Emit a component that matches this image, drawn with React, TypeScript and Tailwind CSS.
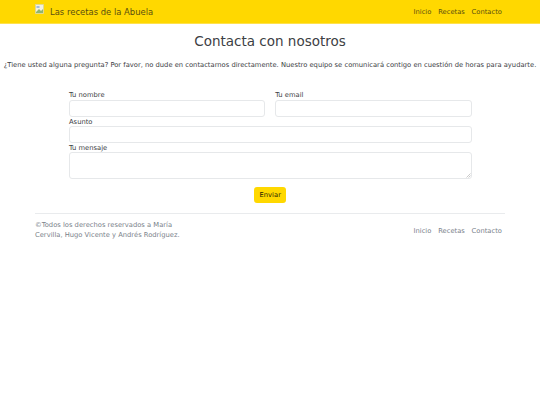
export default function App() {
  const f = { fontFamily: '"DejaVu Sans", sans-serif' };
  const field = "block w-full bg-white border border-[#e6e8ea] rounded-[3px]";
  const label = "block h-[9px] leading-[11px]";
  return (
    <div style={f} className="w-[540px] h-[405px] bg-white text-[#3c4044] overflow-hidden antialiased opacity-[0.999] font-['DejaVu_Sans']">
      <nav className="h-[24px] bg-[#ffd800] border-b border-[#ffe14d] flex items-center justify-between pl-[35px] pr-[38px]">
        <div className="flex items-center">
          <svg width="10" height="12" viewBox="0 0 10 12" className="mr-[5px] -mt-[3px]">
            <rect x="0.5" y="0.5" width="8" height="9" fill="#f4f1dc" stroke="#d8d49f" strokeWidth="0.7" />
            <path d="M1 8 L4 5 L6 7 L8 5 L8 9 L1 9Z" fill="#8fb56f" />
            <rect x="1.5" y="2" width="3" height="2" fill="#9fbce0" />
          </svg>
          <span className="text-[8.44px] leading-[12px] mt-[1px] text-[#5a4f10]">Las recetas de la Abuela</span>
        </div>
        <div className="flex gap-[6.75px] text-[6.75px] leading-[10px] mt-[1px] text-[#5a4f10]">
          <span>Inicio</span><span>Recetas</span><span>Contacto</span>
        </div>
      </nav>
      <h1 className="text-[13.5px] leading-[18px] text-center mt-[8px] text-[#3c4044]">Contacta con nosotros</h1>
      <p className="text-[6.75px] leading-[12px] text-center mt-[9px] whitespace-nowrap">¿Tiene usted alguna pregunta? Por favor, no dude en contactarnos directamente. Nuestro equipo se comunicará contigo en cuestión de horas para ayudarte.</p>
      <form className="ml-[69px] w-[402.5px] mt-[19px] text-[6.75px] leading-[9px]">
        <div className="grid grid-cols-2 gap-x-[10px]">
          <div><label className={label + " mb-[0.5px]"}>Tu nombre</label><div className={field + " h-[17px]"} /></div>
          <div><label className={label + " mb-[0.5px]"}>Tu email</label><div className={field + " h-[17px]"} /></div>
        </div>
        <label className={label}>Asunto</label>
        <div className={field + " h-[17px]"} />
        <label className={label}>Tu mensaje</label>
        <div className={field + " h-[27px] relative"}>
          <svg width="5" height="5" viewBox="0 0 5 5" className="absolute right-0 bottom-0">
            <path d="M0.5 4.5 L4.5 0.5 M2.5 4.5 L4.5 2.5" stroke="#a8a8a8" strokeWidth="0.6" />
          </svg>
        </div>
        <div className="flex justify-center mt-[8px]">
          <button type="button" className="h-[16.5px] w-[32px] pt-[1px] bg-[#ffd800] rounded-[3px] text-[6.75px] text-[#2b2500]">Enviar</button>
        </div>
      </form>
      <footer className="mx-[35px] mt-[9.5px] border-t border-[#e9ebed] flex justify-between text-[6.75px] leading-[10px] text-[#7a828a]">
        <p className="w-[150px] mt-[6px]">©Todos los derechos reservados a María Cervilla, Hugo Vicente y Andrés Rodríguez.</p>
        <div className="flex gap-[6.75px] mt-[12px] pr-[3px]"><span>Inicio</span><span>Recetas</span><span>Contacto</span></div>
      </footer>
    </div>
  );
}
